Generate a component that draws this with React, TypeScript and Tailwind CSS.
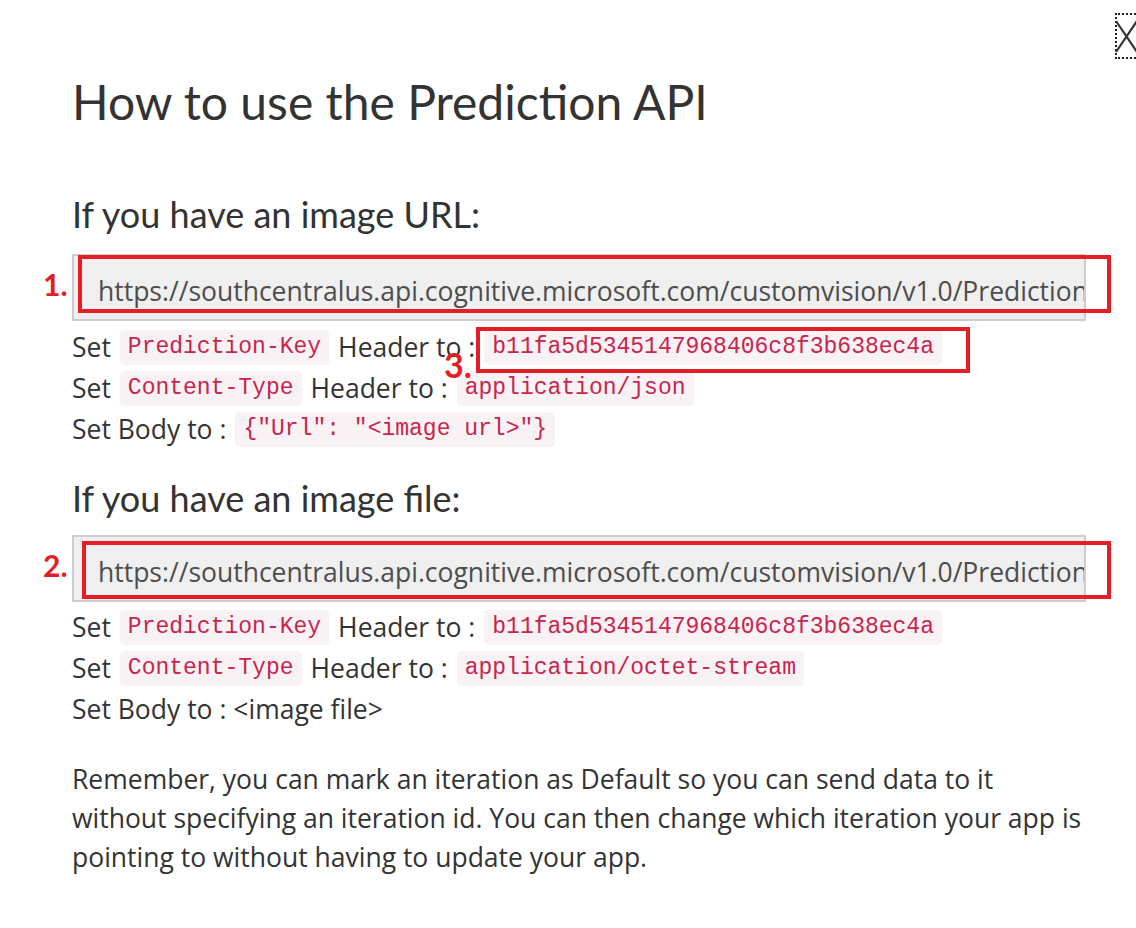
import React from "react";

const head = { fontFamily: 'Lato, "Open Sans", sans-serif' };
const body = { fontFamily: '"Open Sans", "Noto Sans", sans-serif' };
const mono = { fontFamily: 'Consolas, "Liberation Mono", monospace' };

function Code({ children }: { children: React.ReactNode }) {
  return (
    <span
      style={mono}
      className="inline-block rounded-[4px] bg-[#f9f2f4] px-[8px] text-[23px] leading-[35px] text-[#c7254e] align-middle"
    >
      {children}
    </span>
  );
}

function Row({ children }: { children: React.ReactNode }) {
  return (
    <div className="flex h-[41px] items-center gap-[9px] whitespace-nowrap text-[26.5px] text-[#333333]">
      {children}
    </div>
  );
}

function UrlBox({ label, rl, rt }: { label: string; rl: number; rt: number }) {
  return (
    <div className="relative h-[67px] w-[1014px] border-2 border-[#cccccc] bg-[#efefef]">
      <div className="flex h-full items-center overflow-hidden whitespace-nowrap pl-[24px] pt-[8px] text-[26.5px] text-[#4d4d4d]">
        https://southcentralus.api.cognitive.microsoft.com/customvision/v1.0/Prediction/
      </div>
      <div
        style={{ left: rl, top: rt, width: 1037 - rl }}
        className="absolute h-[58px] border-[4px] border-[#e31e26]"
      />
      <div style={head} className="absolute left-[-31px] top-[10px] text-[30px] font-bold leading-[36px] text-[#e31e26]">
        {label}
      </div>
    </div>
  );
}

export default function App() {
  return (
    <div style={body} className="relative h-[928px] w-[1136px] overflow-hidden bg-white text-[#333333]">
      <div className="absolute left-[1115px] top-[13px] h-[46px] w-[40px] border-2 border-dotted border-[#222]" />
      <svg width="22" height="46" viewBox="0 0 22 46" className="absolute left-[1115px] top-[13px]">
        <path d="M1 8 L22 39 M22 8 L1 39" stroke="#333" strokeWidth="2.2" fill="none" />
      </svg>

      <div className="pl-[72px] pt-[72px]">
        <h1 style={head} className="text-[48px] font-normal leading-[60px]">How to use the Prediction API</h1>
        <h2 style={head} className="mt-[60px] text-[36px] font-normal leading-[44px]">If you have an image URL:</h2>
        <div className="mt-[18px]">
          <UrlBox label="1." rl={4} rt={-1} />
        </div>
        <div className="relative mt-[6px]">
          <Row>
            <span>Set</span>
            <Code>Prediction-Key</Code>
            <span>Header to :</span>
            <Code>b11fa5d5345147968406c8f3b638ec4a</Code>
          </Row>
          <div className="absolute left-[404px] top-[0px] h-[46px] w-[494px] border-[4px] border-[#e31e26]" />
          <div style={head} className="absolute left-[372px] top-[18px] text-[34px] font-bold leading-[40px] text-[#e31e26]">3.</div>
          <Row>
            <span>Set</span>
            <Code>Content-Type</Code>
            <span>Header to :</span>
            <Code>application/json</Code>
          </Row>
          <Row>
            <span>Set Body to :</span>
            <Code>{'{"Url": "<image url>"}'}</Code>
          </Row>
        </div>

        <h2 style={head} className="mt-[26px] text-[36px] font-normal leading-[44px]">If you have an image file:</h2>
        <div className="mt-[15px]">
          <UrlBox label="2." rl={8} rt={4} />
        </div>
        <div className="mt-[5px]">
          <Row>
            <span>Set</span>
            <Code>Prediction-Key</Code>
            <span>Header to :</span>
            <Code>b11fa5d5345147968406c8f3b638ec4a</Code>
          </Row>
          <Row>
            <span>Set</span>
            <Code>Content-Type</Code>
            <span>Header to :</span>
            <Code>application/octet-stream</Code>
          </Row>
          <Row>
            <span>Set Body to : &lt;image file&gt;</span>
          </Row>
        </div>

        <p className="mt-[30px] w-[1060px] text-[26.5px] leading-[39px] text-[#333333]">
          Remember, you can mark an iteration as Default so you can send data to it
          <br />
          without specifying an iteration id. You can then change which iteration your app is
          <br />
          pointing to without having to update your app.
        </p>
      </div>
    </div>
  );
}
